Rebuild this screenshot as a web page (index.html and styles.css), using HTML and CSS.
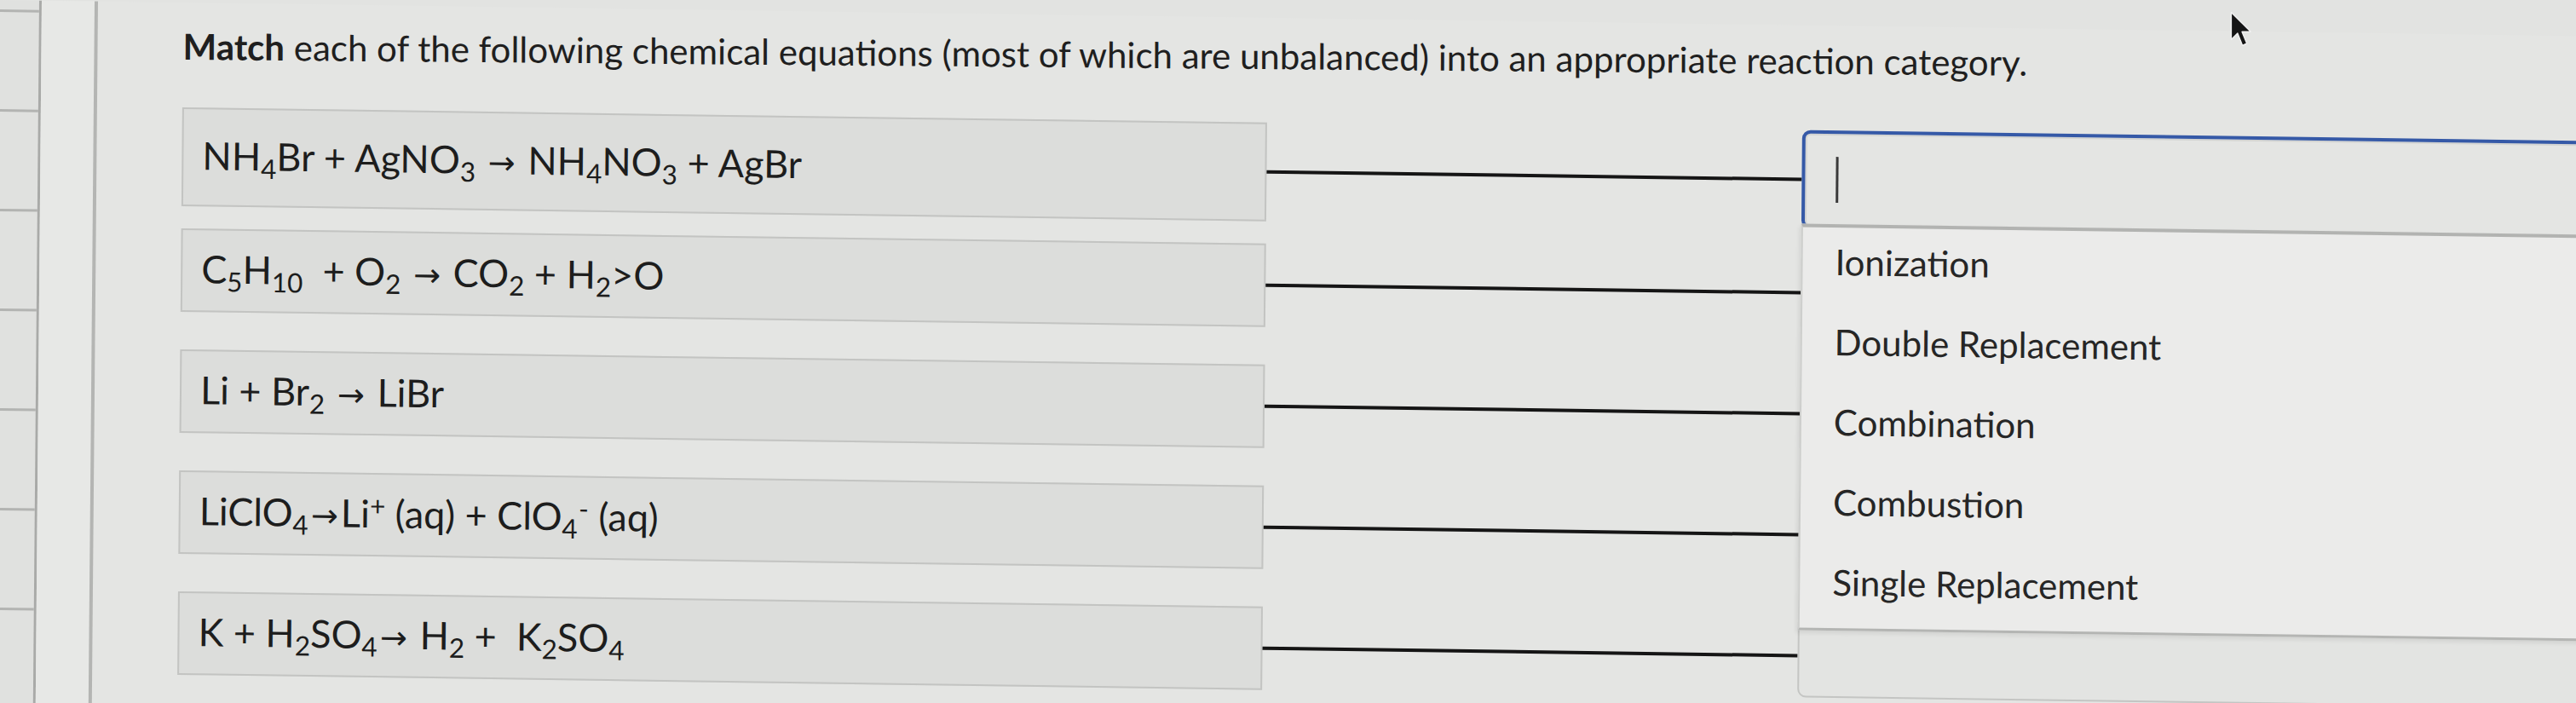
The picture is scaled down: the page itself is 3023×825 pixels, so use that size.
FILE: index.html
```html
<!DOCTYPE html>
<html lang="en">
<head>
<meta charset="utf-8">
<title>Match chemical equations</title>
<link rel="stylesheet" href="styles.css">
</head>
<body>
<div class="screen">
  <aside class="rail">
    <div class="rail-item"></div>
    <div class="rail-item"></div>
    <div class="rail-item"></div>
    <div class="rail-item"></div>
    <div class="rail-item"></div>
    <div class="rail-item"></div>
    <div class="rail-item"></div>
  </aside>
  <div class="gutter"></div>
  <main class="question">
    <p class="prompt"><b>Match</b> each of the following chemical equations (most of which are unbalanced) into an appropriate reaction category.</p>
    <div class="rows">
      <div class="row">
        <div class="eq"><span class="formula">NH<sub>4</sub>Br + AgNO<sub>3</sub> <span class="arr">→</span> NH<sub>4</sub>NO<sub>3</sub> + AgBr</span></div>
        <div class="connector"></div>
        <div class="answer open">
          <span class="caret"></span>
          <ul class="menu">
            <li>Ionization</li>
            <li>Double Replacement</li>
            <li>Combination</li>
            <li>Combustion</li>
            <li>Single Replacement</li>
          </ul>
        </div>
      </div>
      <div class="row">
        <div class="eq"><span class="formula">C<sub>5</sub>H<sub>10</sub> &nbsp;+ O<sub>2</sub> <span class="arr">→</span> CO<sub>2</sub> + H<sub>2</sub>&gt;O</span></div>
        <div class="connector"></div>
        <div class="answer"></div>
      </div>
      <div class="row">
        <div class="eq"><span class="formula">Li + Br<sub>2</sub> <span class="arr">→</span> LiBr</span></div>
        <div class="connector"></div>
        <div class="answer"></div>
      </div>
      <div class="row">
        <div class="eq"><span class="formula">LiClO<sub>4</sub><span class="arr">→</span>Li<sup>+</sup> (aq) + ClO<sub>4</sub><sup class="charge">-</sup> (aq)</span></div>
        <div class="connector"></div>
        <div class="answer"></div>
      </div>
      <div class="row">
        <div class="eq"><span class="formula">K + H<sub>2</sub>SO<sub>4</sub><span class="arr">→</span> H<sub>2</sub> + &nbsp;K<sub>2</sub>SO<sub>4</sub></span></div>
        <div class="connector"></div>
        <div class="answer"></div>
      </div>
    </div>
  </main>
</div>
<svg class="pointer" width="32" height="46" viewBox="0 0 28 40" aria-hidden="true">
  <path d="M3 2 L3 30 L9.5 23.5 L14.5 36 L19 34 L14 22 L23 22 Z" fill="#151515" stroke="#f2f2f2" stroke-width="1.2" stroke-linejoin="round"/>
</svg>
</body>
</html>
```

FILE: styles.css
```css
html, body {
  margin: 0;
  padding: 0;
  background: #e2e3e1;
  overflow: hidden;
  height: 825px;
}

body {
  position: relative;
  font-family: Lato, "Noto Sans", "DejaVu Sans", sans-serif;
  color: #222;
}

.screen {
  width: 3160px;
  height: 900px;
  display: flex;
  transform-origin: 0 0;
  transform: skewY(0.8deg) skewX(-0.5deg);
  background: #e4e5e3;
}

.rail {
  width: 46px;
  flex: none;
  padding-top: 11px;
  border-right: 3px solid #a9aaa8;
  background: #e0e1df;
}

.rail-item {
  height: 114px;
  border-top: 3px solid #b3b4b2;
}

.gutter {
  width: 62px;
  flex: none;
  border-right: 4px solid #b4b5b3;
  background: #e7e8e6;
}

.question {
  flex: 1;
  padding: 26px 0 0 100px;
}

.prompt {
  margin: 0 0 47px;
  font-size: 42px;
  line-height: 50px;
  color: #1f1f1f;
  white-space: nowrap;
  transform-origin: 0 50%;
  transform: rotate(-0.3deg);
}

.prompt b {
  font-weight: 700;
}

.rows {
  display: flex;
  flex-direction: column;
  gap: 44px;
}

.row {
  display: grid;
  grid-template-columns: 1273px 628px 1fr;
  align-items: center;
  height: 98px;
}

.eq {
  height: 100%;
  box-sizing: border-box;
  display: flex;
  align-items: center;
  padding-left: 22px;
  border: 2px solid #c3c4c2;
  background: #dcdddb;
  color: #1d1d1d;
}

.formula {
  font-size: 45px;
  line-height: 50px;
  white-space: pre;
}

.formula sub,
.formula sup {
  font-size: 0.7em;
  line-height: 0;
}

.formula sub {
  vertical-align: -0.3em;
}

.formula sup {
  vertical-align: 0.45em;
}

.formula sup.charge {
  padding-left: 0.04em;
}

.arr {
  font-family: "DejaVu Sans", sans-serif;
  font-size: 0.85em;
  padding: 0 0.08em;
}

.connector {
  height: 4px;
  background: #151515;
}

.answer {
  height: 100%;
  box-sizing: border-box;
  position: relative;
  border: 2px solid #c4c5c3;
  border-radius: 10px;
  background: #e3e4e2;
  display: flex;
  align-items: center;
}

.answer.open {
  align-self: start;
  height: 116px;
  border: 4px solid #3559a7;
  box-shadow: inset 0 0 0 2px #d3d4d2;
  background: #e4e5e3;
  z-index: 2;
}

.caret {
  width: 3px;
  height: 54px;
  margin-left: 36px;
  background: #3a3a3a;
}

.menu {
  position: absolute;
  left: -4px;
  right: -4px;
  top: calc(100% - 2px);
  margin: 0;
  padding: 0;
  list-style: none;
  background: #ebebea;
  border-top: 4px solid #b2b3b1;
  border-left: 2px solid #cdcecc;
  border-bottom: 3px solid #b4b5b3;
  box-shadow: -2px 3px 5px rgba(0, 0, 0, 0.08);
}

.menu li {
  height: 94px;
  box-sizing: border-box;
  padding: 0 0 14px 38px;
  display: flex;
  align-items: center;
  font-size: 42px;
  color: #262626;
}

.pointer {
  position: absolute;
  left: 2615px;
  top: 12px;
}
```
